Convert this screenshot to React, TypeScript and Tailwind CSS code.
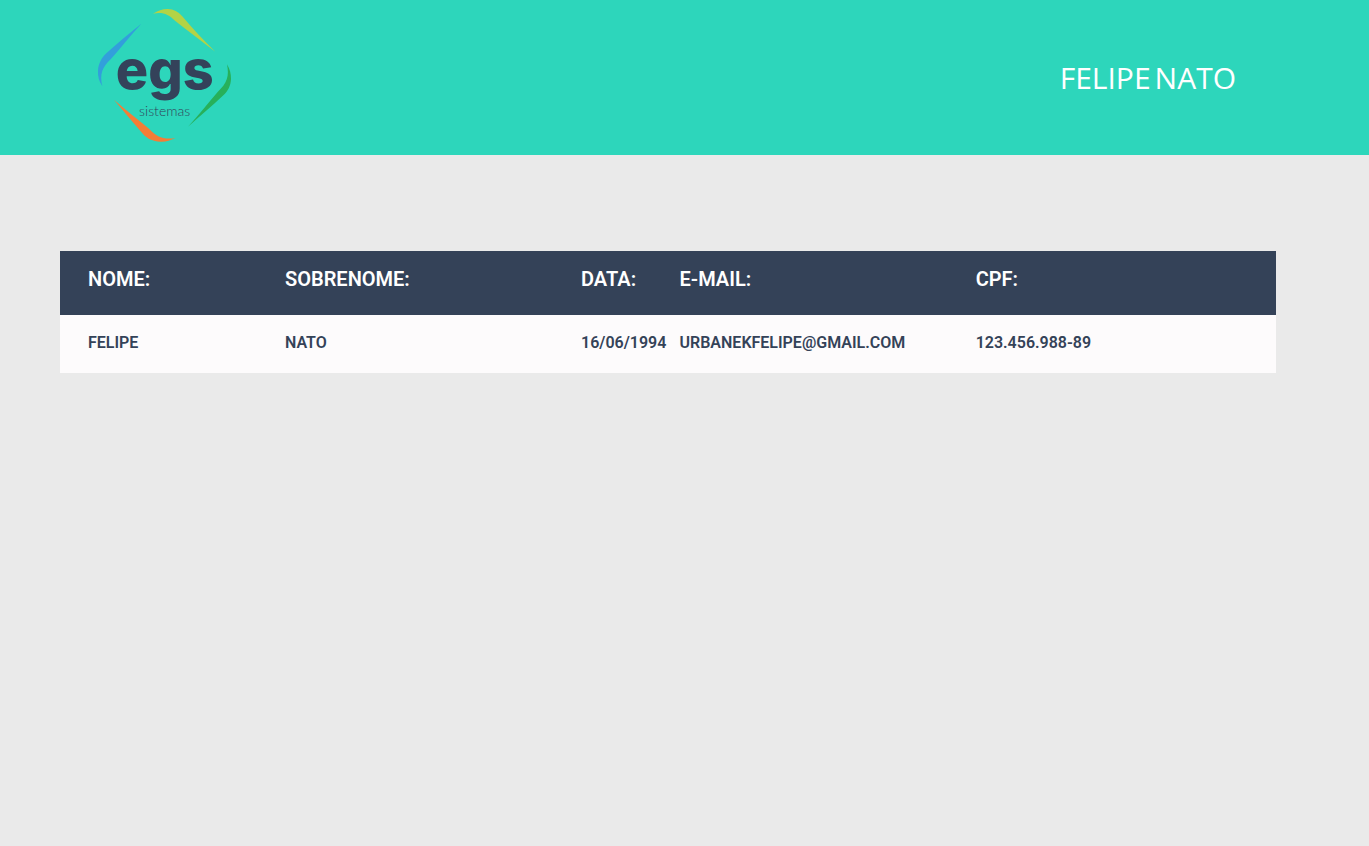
const columns = [
  { label: "NOME:", width: "w-[18.5%]" },
  { label: "SOBRENOME:", width: "w-[24.35%]" },
  { label: "DATA:", width: "w-[8.1%]" },
  { label: "E-MAIL:", width: "w-[24.35%]" },
  { label: "CPF:", width: "w-[24.7%]" },
];

const people = [
  ["FELIPE", "NATO", "16/06/1994", "URBANEKFELIPE@GMAIL.COM", "123.456.988-89"],
];

function Logo() {
  return (
    <svg className="h-[155px] w-40" viewBox="0 0 480 465" role="img" aria-label="egs sistemas">
      <path fill="#b3d346" d="M204 41C218 32 232 27 248 27C267 28 279 35 291 48C322 84 354 120 391 155C348 121 310 94 270 62C250 42 232 35 204 41Z" />
      <path fill="#329fdb" d="M169 71C136 107 107 144 77 178C51 203 44 222 52 259C42 243 38 229 39 212C40 192 49 174 64 160C98 129 133 100 169 71Z" />
      <path fill="#27b05a" d="M426 193C435 208 438 222 438 237C437 258 429 273 415 286C381 318 345 349 309 380C341 346 369 309 398 276C427 249 433 228 426 193Z" />
      <path fill="#f47d36" d="M87 299C122 330 157 357 192 386C214 411 238 420 271 414C256 422 241 426 226 425C203 424 187 416 174 402C144 367 115 333 87 299Z" />
      <text x="239" y="268" textAnchor="middle" fill="#34425a" fontSize="162" fontWeight="800" fontFamily="Inter, sans-serif">egs</text>
      <text x="239" y="348" textAnchor="middle" fill="#34425a" fontSize="42" fontWeight="300" fontFamily="Lato, sans-serif">sistemas</text>
    </svg>
  );
}

export default function App() {
  return (
    <div className="min-h-screen bg-[#eaeaea] font-['Roboto',sans-serif]">
      <header className="flex items-center justify-between bg-[#2dd6bb] pr-[133px] pl-[85px]">
        <Logo />
        <p className="flex gap-1 font-['Open_Sans','Noto_Sans',sans-serif] text-3xl text-white">
          <span>FELIPE</span>
          <span>NATO</span>
        </p>
      </header>
      <main className="pt-24 pr-[93px] pl-[60px]">
        <table className="w-full table-fixed text-left text-[#344258]">
          <thead className="bg-[#344258] text-xl text-white">
            <tr className="h-16">
              {columns.map((column, i) => (
                <th
                  key={column.label}
                  scope="col"
                  className={`${column.width} ${i === 0 ? "pl-7" : ""} pt-3.5 align-top font-semibold whitespace-nowrap`}
                >
                  {column.label}
                </th>
              ))}
            </tr>
          </thead>
          <tbody className="bg-[#fdfbfc] text-base font-semibold">
            {people.map((person) => (
              <tr key={person[4]} className="h-[58px]">
                {person.map((value, i) => (
                  <td key={value} className={`${i === 0 ? "pl-7" : ""} pt-4 align-top whitespace-nowrap`}>
                    {value}
                  </td>
                ))}
              </tr>
            ))}
          </tbody>
        </table>
      </main>
    </div>
  );
}
